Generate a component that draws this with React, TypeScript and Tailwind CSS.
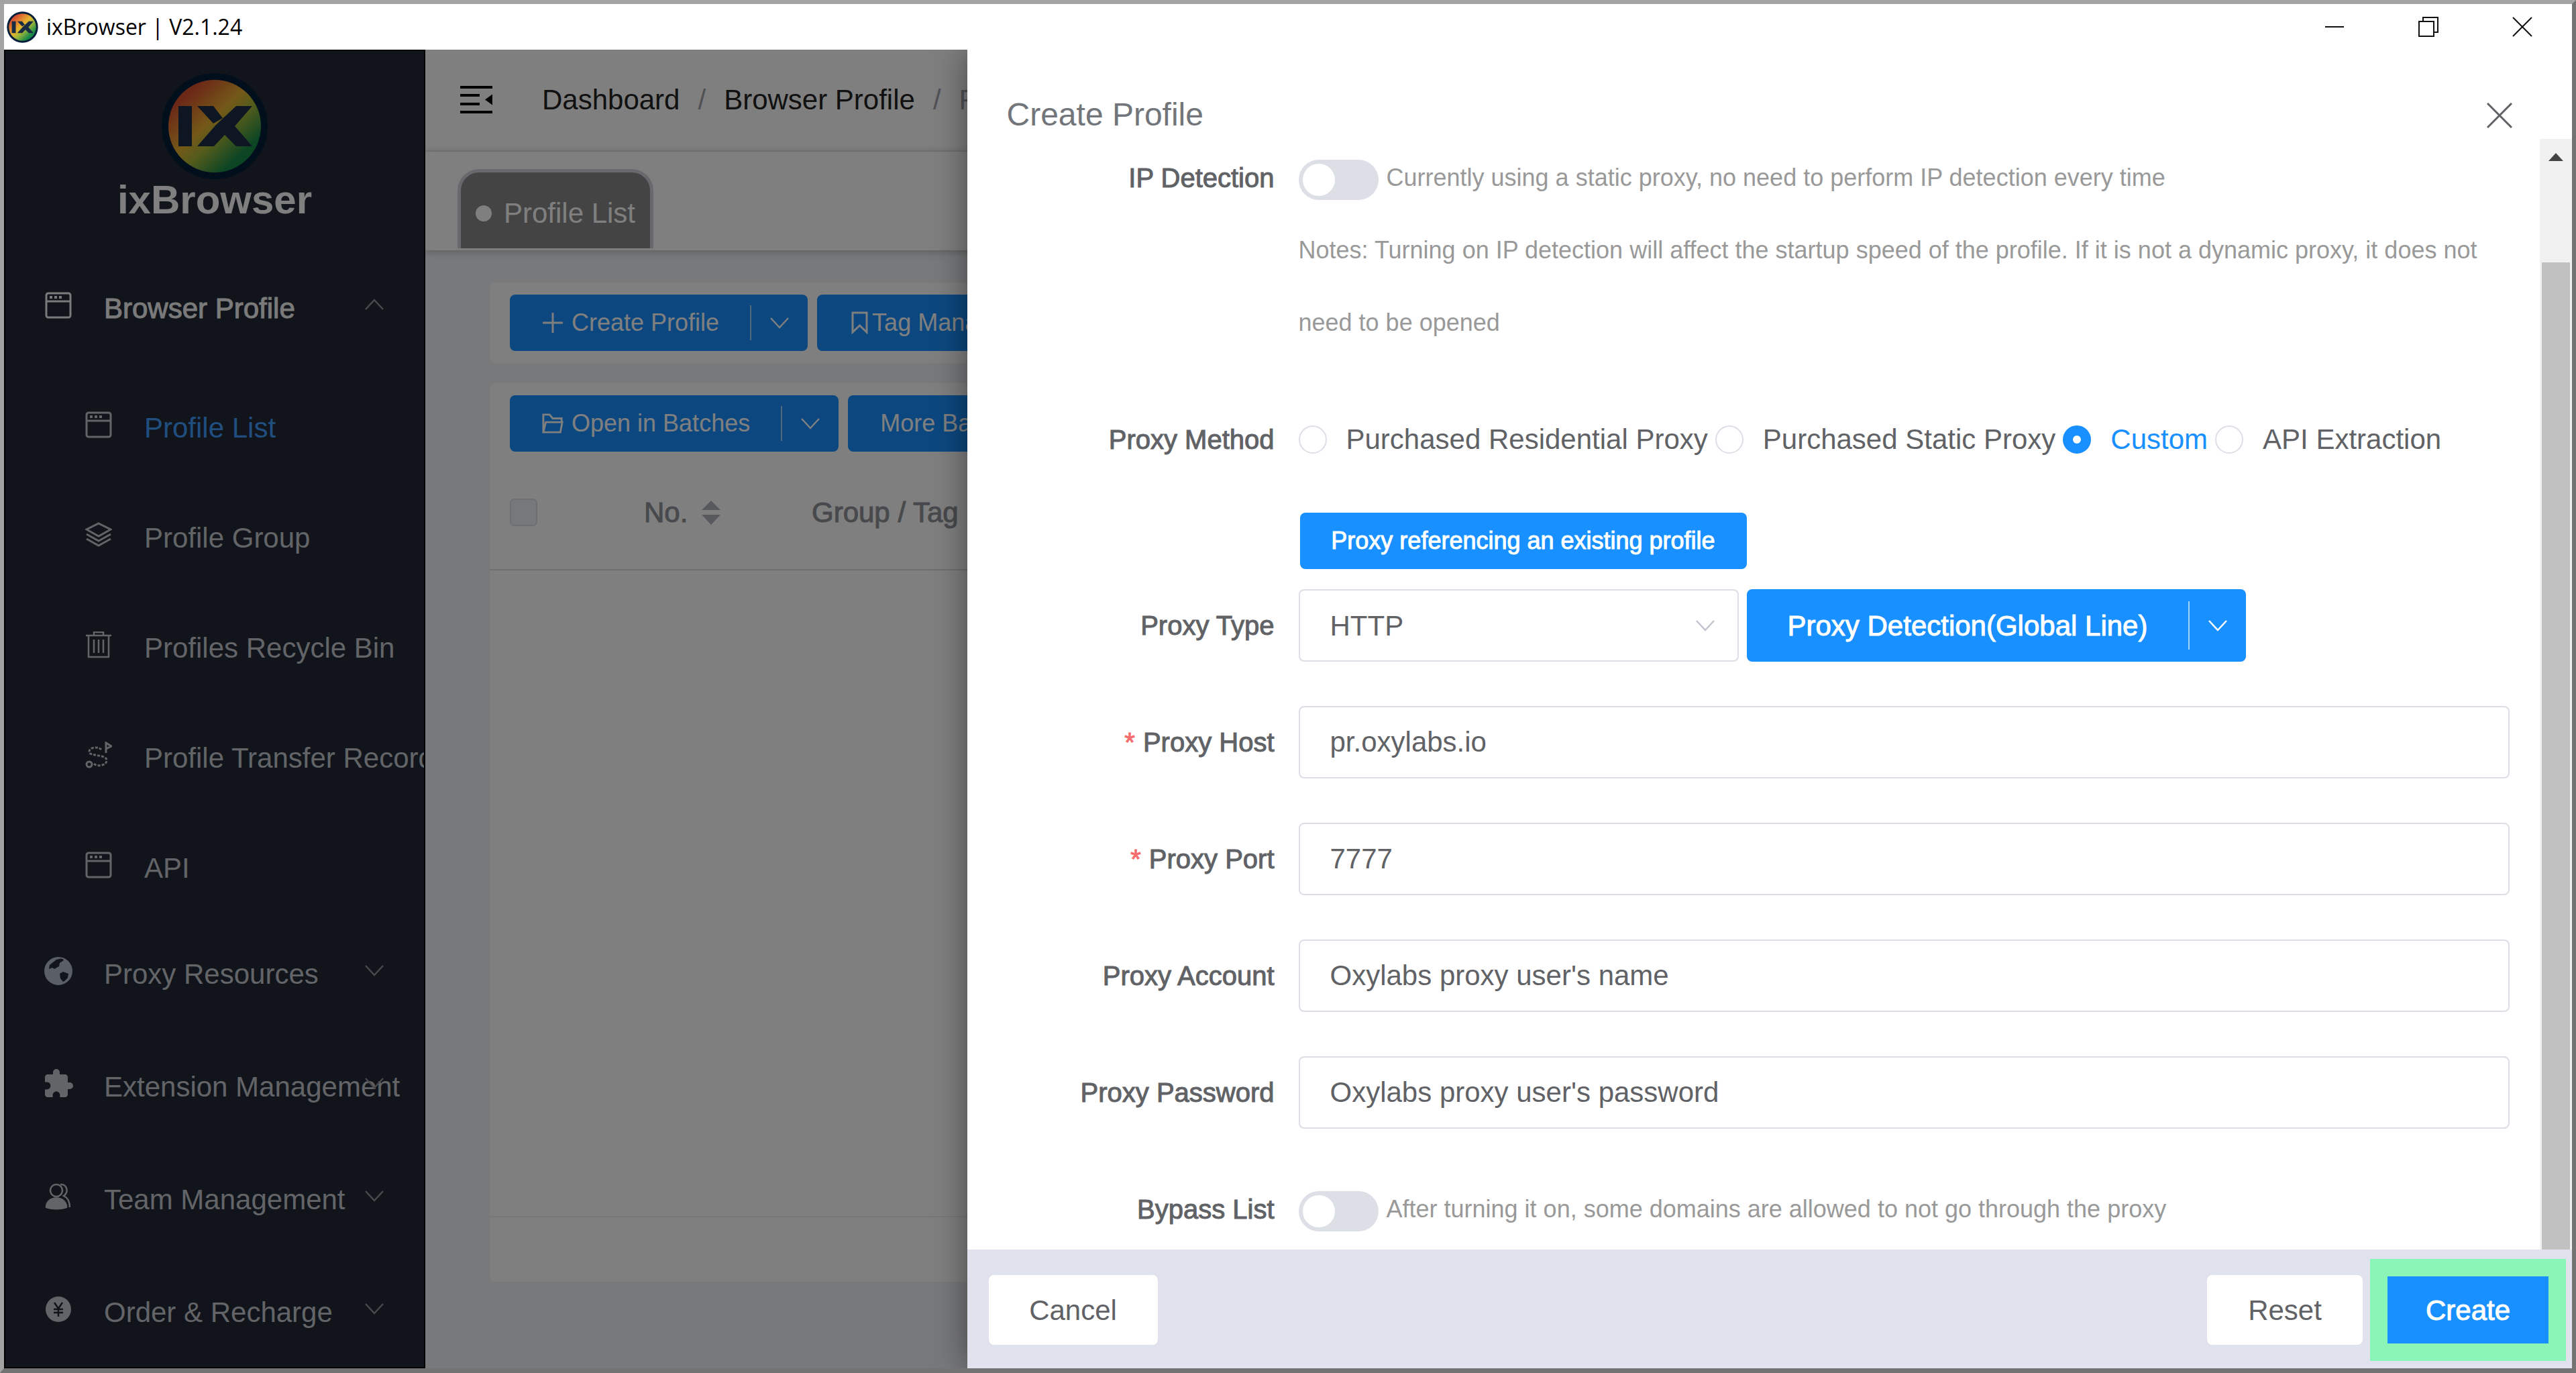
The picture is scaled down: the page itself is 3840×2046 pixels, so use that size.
import type { ReactNode } from 'react';
import { MdExtension } from 'react-icons/md';

const BrowserIcon = () => (
  <svg viewBox="0 0 40 40" className="size-10" fill="none" stroke="currentColor" strokeWidth="3">
    <rect x="2" y="2" width="36" height="36" rx="3" />
    <path d="M2 14h36" />
    <path d="M7 8h4M14 8h4M21 8h4" strokeWidth="4" />
  </svg>
);

const LayersIcon = () => (
  <svg viewBox="0 0 40 40" className="size-10" fill="none" stroke="currentColor" strokeWidth="3">
    <path d="M20 3l18 9-18 10L2 12z" />
    <path d="M2 19l18 10 18-10M2 26l18 10 18-10" />
  </svg>
);

const BinIcon = () => (
  <svg viewBox="0 0 40 40" className="size-10" fill="none" stroke="currentColor" strokeWidth="2.5">
    <path d="M1 6h38M13 6V1h14v5M5 6v32h30V6" />
    <path d="M13 12v20M20 12v20M27 12v20" />
  </svg>
);

const TransferIcon = () => (
  <svg viewBox="0 0 40 40" className="size-10" fill="none" stroke="currentColor" strokeWidth="3">
    <path d="M24 12c-4-5-19-4-18 4 1 6 26 3 26 12 0 8-14 10-19 5" strokeDasharray="4 2" />
    <circle cx="6" cy="34" r="4" />
    <path d="M31 17V2l8 5-8 4" />
  </svg>
);

const GlobeIcon = () => (
  <svg viewBox="0 0 44 44" className="-mx-0.5 size-11 text-[#b4bccb]">
    <circle cx="22" cy="22" r="20" fill="currentColor" />
    <path d="M19 5l9-2 2 3-6 4-1 5-7 4-3-2-5 2 1-6zM24 26l5-3 8 3-1 6-5 5-2 1-4-5z" fill="#222835" />
    <circle cx="22" cy="22" r="20" fill="none" stroke="currentColor" strokeWidth="2" />
  </svg>
);

const TeamIcon = () => (
  <svg viewBox="0 0 40 40" className="size-10" fill="none" stroke="currentColor" strokeWidth="2.5">
    <circle cx="17" cy="11" r="9" />
    <path d="M23 2c10-1 13 12 5 17 6 3 9 9 9 17" />
    <path d="M2 36c0-18 30-18 30 0-6 3-24 3-30 0z" fill="currentColor" />
  </svg>
);

const YenIcon = () => (
  <svg viewBox="0 0 40 40" className="size-10">
    <circle cx="20" cy="20" r="19" fill="currentColor" />
    <path d="M14 10l6 9 6-9M20 19v12M13 20h14M13 25h14" fill="none" stroke="#222835" strokeWidth="2.5" />
  </svg>
);

const Chevron = ({ up, className }: { up?: boolean; className?: string }) => (
  <svg viewBox="0 0 28 18" className={className} fill="none" stroke="currentColor" strokeWidth="2.5">
    <path d={up ? 'M1 16L14 2l13 14' : 'M1 2l13 14L27 2'} />
  </svg>
);

const Logo = ({ id, className }: { id: string; className: string }) => (
  <svg viewBox="0 0 160 160" className={className}>
    <defs>
      <linearGradient id={id} x1="0.1" y1="0.1" x2="0.85" y2="0.9">
        <stop offset="0.1" stopColor="#d8502f" />
        <stop offset="0.45" stopColor="#e8b230" />
        <stop offset="0.62" stopColor="#a8b838" />
        <stop offset="0.9" stopColor="#178a48" />
      </linearGradient>
    </defs>
    <circle cx="80" cy="80" r="79" fill="#021e3a" />
    <circle cx="80" cy="80" r="69" fill={`url(#${id})`} />
    <path
      d="M26 50h20v60H26zM54 50h24l14 18-14 8zM112 50h24l-26 30 26 30h-24L95 93l-16 17H54l28-32z"
      fill="#1a2c44"
    />
  </svg>
);

const subMenus = [
  { label: 'Profile List', icon: <BrowserIcon />, active: true },
  { label: 'Profile Group', icon: <LayersIcon /> },
  { label: 'Profiles Recycle Bin', icon: <BinIcon /> },
  { label: 'Profile Transfer Record', icon: <TransferIcon /> },
  { label: 'API', icon: <BrowserIcon /> },
];

const menus = [
  { label: 'Proxy Resources', icon: <GlobeIcon /> },
  { label: 'Extension Management', icon: <MdExtension className="-m-1 size-12" /> },
  { label: 'Team Management', icon: <TeamIcon /> },
  { label: 'Order & Recharge', icon: <YenIcon /> },
];

const TitleBar = () => (
  <header className="z-10 flex h-[68px] shrink-0 items-center bg-white pr-1 pl-1">
    <Logo id="logo-small" className="size-[47px]" />
    <h1 className="ml-3 font-['Open_Sans','Noto_Sans',sans-serif] text-[32px] leading-10 text-black">
      ixBrowser | V2.1.24
    </h1>
    <div className="ml-auto flex">
      <button aria-label="Minimize" className="flex w-[140px] justify-center">
        <svg viewBox="0 0 30 30" className="size-[30px]" stroke="#111" strokeWidth="2">
          <path d="M1 15h28" />
        </svg>
      </button>
      <button aria-label="Restore" className="flex w-[140px] justify-center">
        <svg viewBox="0 0 30 30" className="size-[30px]" fill="none" stroke="#111" strokeWidth="2">
          <path d="M1 7h22v22H1zM7 7V1h22v22h-6" />
        </svg>
      </button>
      <button aria-label="Close" className="flex w-[140px] justify-center">
        <svg viewBox="0 0 30 30" className="size-[30px]" fill="none" stroke="#111" strokeWidth="2">
          <path d="M1 1l28 28M29 1L1 29" />
        </svg>
      </button>
    </div>
  </header>
);

const Sidebar = () => (
  <aside className="w-[628px] shrink-0 overflow-hidden border-2 border-black bg-[#222835] text-[42px] leading-[48px] whitespace-nowrap text-[#c4c8d0]">
    <div className="flex flex-col items-center pt-8">
      <Logo id="logo-large" className="size-40" />
      <p className="text-[60px] leading-[60px] font-bold text-white">ixBrowser</p>
    </div>
    <nav className="mt-12">
      <button className="relative flex h-[168px] w-full items-center gap-12 pl-[59px] text-[#f4f4f5]">
        <span className="pb-2.5">
          <BrowserIcon />
        </span>
        <span className="[-webkit-text-stroke:1px]">Browser Profile</span>
        <Chevron up className="absolute right-[60px] mb-3 h-[18px] w-7 text-[#909399]" />
      </button>
      <ul className="flex flex-col gap-6 pt-6 pb-1">
        {subMenus.map((menu) => (
          <li key={menu.label}>
            <a href="#" className="flex h-[140px] items-center gap-12 pl-[119px]">
              <span className="pb-2.5">{menu.icon}</span>
              <span className={menu.active ? 'text-[#409eff]' : ''}>{menu.label}</span>
            </a>
          </li>
        ))}
      </ul>
      {menus.map((menu) => (
        <button key={menu.label} className="relative flex h-[168px] w-full items-center gap-12 pl-[59px]">
          <span className="pb-2.5">{menu.icon}</span>
          <span>{menu.label}</span>
          <Chevron className="absolute right-[60px] mb-3 h-[18px] w-7 text-[#909399]" />
        </button>
      ))}
    </nav>
  </aside>
);

const SplitButton = ({ icon, children }: { icon: ReactNode; children: ReactNode }) => (
  <div className="flex h-[84px] shrink-0 items-center rounded-lg bg-[#1890ff] text-white">
    <button className="flex h-full items-center gap-3 pr-[46px] pl-12">
      {icon}
      {children}
    </button>
    <span className="h-[52px] w-0.5 bg-white/60" />
    <button aria-label="More" className="flex h-full items-center px-7">
      <Chevron className="h-[18px] w-7" />
    </button>
  </div>
);

const ProfileListPage = () => (
  <main className="flex min-w-0 flex-1 flex-col overflow-hidden bg-[#f1f3f6] whitespace-nowrap">
    <div className="flex h-[152px] shrink-0 items-center border-b-2 border-[#f0f0f2] bg-white pl-[52px] text-[42px] leading-[48px]">
      <button aria-label="Collapse menu">
        <svg viewBox="0 0 48 44" className="h-11 w-12" stroke="#000" strokeWidth="4">
          <path d="M0 3h48M0 15h29M0 28h29M0 40h48" />
          <path d="M37 21.500l11-8v16z" stroke="none" />
        </svg>
      </button>
      <ol className="ml-[74px] flex gap-[27px] text-[#222]">
        <li>
          <a href="#">Dashboard</a>
        </li>
        <li className="text-[#a0a4ac]">/</li>
        <li>
          <a href="#">Browser Profile</a>
        </li>
        <li className="text-[#a0a4ac]">/</li>
        <li className="text-[#a0a4ac]">Profile List</li>
      </ol>
    </div>
    <div className="z-0 flex h-[147px] shrink-0 items-end bg-white pb-[3px] pl-12 shadow-[0_2px_12px_rgba(0,0,0,0.25)]">
      <a
        href="#"
        className="flex h-[118px] w-[292px] items-center justify-center gap-[18px] rounded-t-[32px] border-[5px] border-b-0 border-[#d0d2d9] bg-[#888] pt-2 text-[42px] text-white"
      >
        <span className="size-6 rounded-full bg-white" />
        Profile List
      </a>
    </div>
    <div className="flex flex-1 flex-col gap-[30px] pt-12 pr-24 pb-[129px] pl-24 text-[36px] leading-[42px]">
      <div className="flex gap-3.5 overflow-hidden rounded-lg bg-white px-[30px] py-[18px]">
        <SplitButton
          icon={
            <svg viewBox="0 0 32 32" className="size-8" stroke="currentColor" strokeWidth="3">
              <path d="M16 1v30M1 16h30" />
            </svg>
          }
        >
          Create Profile
        </SplitButton>
        <button className="flex h-[84px] shrink-0 items-center gap-1 rounded-lg bg-[#1890ff] px-12 text-white">
          <svg viewBox="0 0 30 34" className="h-[34px] w-[30px]" fill="none" stroke="currentColor" strokeWidth="3">
            <path d="M5 2h21v29l-10.500-10L5 31z" />
          </svg>
          Tag Management
        </button>
      </div>
      <div className="flex flex-1 flex-col overflow-hidden rounded-lg bg-white pt-[18px]">
        <div className="flex gap-3.5 px-[30px]">
          <SplitButton
            icon={
              <svg viewBox="0 0 34 34" className="size-8" fill="none" stroke="currentColor" strokeWidth="3">
                <path d="M2 31V3h10l5 6h14v6M2 31l4-16h26l-3 16z" />
              </svg>
            }
          >
            Open in Batches
          </SplitButton>
          <button className="h-[84px] shrink-0 rounded-lg bg-[#1890ff] px-12 text-white">More Batch Operations</button>
        </div>
        <table className="mt-1.5 w-full table-fixed text-left text-[42px] text-[#909399]">
          <thead>
            <tr className="h-[170px] border-b-2 border-[#dddfe4] [&>th]:font-normal">
              <th className="w-[230px] pl-[30px]">
                <input
                  type="checkbox"
                  aria-label="Select all"
                  className="block size-[41px] appearance-none rounded-md border-2 border-[#dcdfe6] bg-[#eef1f8]"
                />
              </th>
              <th className="w-[250px]">
                <div className="flex items-center gap-[21px] [-webkit-text-stroke:1px]">
                  No.
                  <svg viewBox="0 0 28 36" className="h-9 w-7" fill="#b0b3ba">
                    <path d="M14 0l14 14H0zM0 21h28L14 36z" />
                  </svg>
                </div>
              </th>
              <th className="[-webkit-text-stroke:1px]">Group / Tag</th>
            </tr>
          </thead>
        </table>
        <div className="mt-auto h-[98px] border-t-2 border-[#f0f0f2]" />
      </div>
    </div>
  </main>
);

const Field = ({ label, id, required, children }: { label: string; id: string; required?: boolean; children: ReactNode }) => (
  <div className="flex">
    <label
      htmlFor={id}
      className="w-[458px] shrink-0 text-right text-[40px] leading-[108px] [-webkit-text-stroke:1px]"
    >
      {required && <span className="mr-3 text-[#f56c6c]">*</span>}
      {label}
    </label>
    <div className="ml-9 min-w-0 flex-1">{children}</div>
  </div>
);

const TextField = ({ label, id, value, required }: { label: string; id: string; value: string; required?: boolean }) => (
  <Field label={label} id={id} required={required}>
    <input
      id={id}
      type="text"
      defaultValue={value}
      className="block h-[108px] w-full rounded-lg border-2 border-[#dcdfe6] bg-white px-[45px] text-[42px]"
    />
  </Field>
);

const SwitchField = ({ label, id, hint }: { label: string; id: string; hint: string }) => (
  <Field label={label} id={id}>
    <div className="flex h-[108px] items-center gap-3">
      <input
        id={id}
        type="checkbox"
        role="switch"
        className="mt-1.5 flex h-[60px] w-[119px] appearance-none items-center rounded-full bg-[#dcdfe6] pl-1.5 before:size-12 before:rounded-full before:bg-white"
      />
      <span className="text-[36px] leading-[108px] text-[#999]">{hint}</span>
    </div>
  </Field>
);

const methods = ['Purchased Residential Proxy', 'Purchased Static Proxy', 'Custom', 'API Extraction'];

const CreateProfileDrawer = () => (
  <section
    role="dialog"
    aria-label="Create Profile"
    className="absolute inset-y-0 right-0 flex w-5/8 flex-col bg-white text-[#606266] shadow-[0_0_48px_rgba(0,0,0,0.45)]"
  >
    <div className="flex h-[133px] shrink-0 items-start justify-between pt-[73px] pr-[89px] pl-[59px]">
      <h2 className="text-[48px] leading-[48px] text-[#72767b]">Create Profile</h2>
      <button aria-label="Close drawer" className="mt-1.5">
        <svg viewBox="0 0 38 38" className="size-[38px]" fill="none" stroke="#606266" strokeWidth="3">
          <path d="M1 1l36 36M37 1L1 37" />
        </svg>
      </button>
    </div>
    <div className="flex min-h-0 flex-1">
      <form className="min-w-0 flex-1 overflow-hidden pt-1 pr-[45px]">
        <SwitchField
          label="IP Detection"
          id="ip-detection"
          hint="Currently using a static proxy, no need to perform IP detection every time"
        />
        <p className="ml-[494px] text-[36px] leading-[108px] text-[#999]">
          Notes: Turning on IP detection will affect the startup speed of the profile. If it is not a dynamic proxy, it does not
          need to be opened
        </p>
        <fieldset className="mt-[66px] flex">
          <legend className="float-left w-[458px] text-right text-[40px] leading-[108px] [-webkit-text-stroke:1px]">
            Proxy Method
          </legend>
          <div className="ml-9 flex gap-[11px] whitespace-nowrap">
            {methods.map((method) => (
              <label key={method} className="flex items-center gap-[29px] text-[42px] leading-[108px] has-checked:text-[#1890ff]">
                <input
                  type="radio"
                  name="method"
                  defaultChecked={method === 'Custom'}
                  className="size-[42px] appearance-none rounded-full border-2 border-[#dcdfe6] bg-white checked:border-[15px] checked:border-[#1890ff]"
                />
                {method}
              </label>
            ))}
          </div>
        </fieldset>
        <button
          type="button"
          className="mt-[55px] ml-[496px] block h-[84px] w-[666px] rounded-lg bg-[#1890ff] text-[36px] whitespace-nowrap text-white [-webkit-text-stroke:1px]"
        >
          Proxy referencing an existing profile
        </button>
        <div className="mt-[30px] flex flex-col gap-[66px]">
          <Field label="Proxy Type" id="proxy-type">
            <div className="flex gap-3">
              <div className="relative flex items-center">
                <select
                  id="proxy-type"
                  className="h-[108px] w-[656px] appearance-none rounded-lg border-2 border-[#dcdfe6] bg-white px-[45px] text-[42px]"
                >
                  <option>HTTP</option>
                </select>
                <Chevron className="pointer-events-none absolute right-9 h-[18px] w-7 text-[#c0c4cc]" />
              </div>
              <div className="flex h-[108px] items-center rounded-lg bg-[#1890ff] text-white">
                <button type="button" className="h-full px-[61px] text-[42px] [-webkit-text-stroke:1px]">
                  Proxy Detection(Global Line)
                </button>
                <span className="h-[72px] w-0.5 bg-white/60" />
                <button type="button" aria-label="More lines" className="h-full px-7">
                  <Chevron className="h-[18px] w-7" />
                </button>
              </div>
            </div>
          </Field>
          <TextField label="Proxy Host" id="proxy-host" value="pr.oxylabs.io" required />
          <TextField label="Proxy Port" id="proxy-port" value="7777" required />
          <TextField label="Proxy Account" id="proxy-account" value="Oxylabs proxy user's name" />
          <TextField label="Proxy Password" id="proxy-password" value="Oxylabs proxy user's password" />
          <SwitchField
            label="Bypass List"
            id="bypass-list"
            hint="After turning it on, some domains are allowed to not go through the proxy"
          />
        </div>
      </form>
      <div className="flex w-12 shrink-0 flex-col items-center bg-[#f1f1f1] pt-[21px]">
        <svg viewBox="0 0 22 12" className="h-3 w-[22px]" fill="#444">
          <path d="M11 0l11 12H0z" />
        </svg>
        <div className="mt-[151px] w-[42px] flex-1 bg-[#c1c1c1]" />
      </div>
    </div>
    <footer className="flex h-[177px] shrink-0 items-center bg-[#e0e3ee] pt-[3px] pr-[9px] pl-8 text-[42px]">
      <button className="h-[104px] w-[252px] rounded-lg bg-white">Cancel</button>
      <button className="mr-[11px] ml-auto h-[104px] w-[232px] rounded-lg bg-white">Reset</button>
      <div className="border-[26px] border-[#8af5b6]">
        <button className="block h-[100px] w-[240px] bg-[#1890ff] text-white [-webkit-text-stroke:1px]">Create</button>
      </div>
    </footer>
  </section>
);

const App = () => {
  return (
    <div className="flex h-screen flex-col overflow-hidden border-[6px] border-r-[#737373] border-b-[7px] border-b-[#737373] border-t-[#a3a3a3] border-l-[#a3a3a3] bg-white font-['Liberation_Sans',Arial,sans-serif]">
      <TitleBar />
      <div className="relative flex min-h-0 flex-1">
        <Sidebar />
        <ProfileListPage />
        <div className="absolute inset-0 bg-black/50" />
        <CreateProfileDrawer />
      </div>
    </div>
  );
};

export default App;
